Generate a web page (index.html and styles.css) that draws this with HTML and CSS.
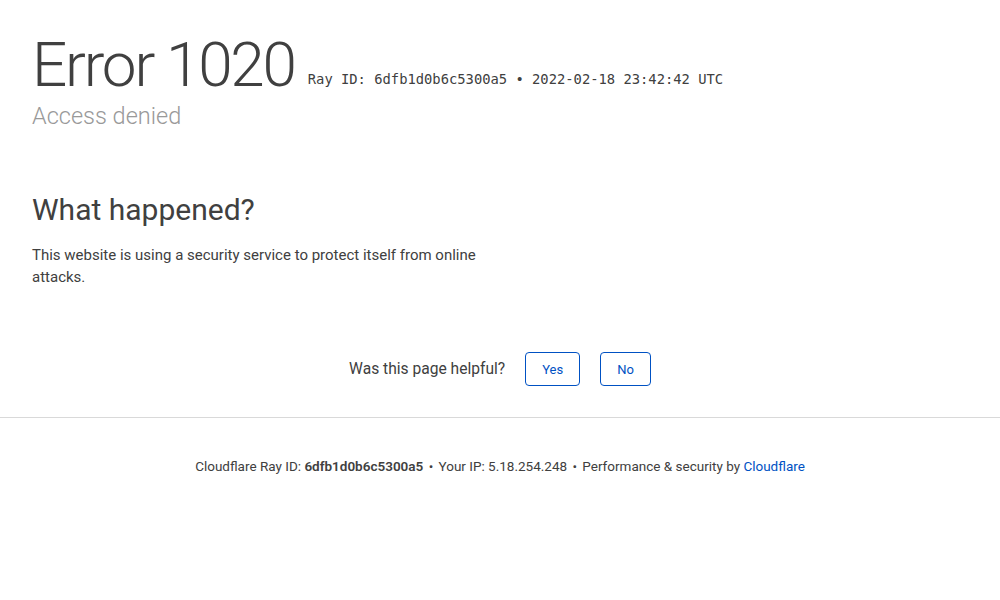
FILE: index.html
```html
<!DOCTYPE html>
<html lang="en">
<head>
<meta charset="utf-8">
<title>Access denied | Cloudflare</title>
<link rel="stylesheet" href="styles.css">
</head>
<body>
<div class="wrapper">
  <header class="header">
    <h1 class="title"><span class="code">Error 1020</span><span class="ray">Ray ID: 6dfb1d0b6c5300a5 &bull; 2022-02-18 23:42:42 UTC</span></h1>
    <h2 class="subtitle">Access denied</h2>
  </header>
  <section class="what">
    <h2 class="what-title">What happened?</h2>
    <p class="what-text">This website is using a security service to protect itself from online attacks.</p>
  </section>
  <div class="feedback">
    <span class="feedback-q">Was this page helpful?</span>
    <button class="fb-btn">Yes</button>
    <button class="fb-btn">No</button>
  </div>
</div>
<footer class="footer">
  <p class="footer-text">Cloudflare Ray ID: <strong>6dfb1d0b6c5300a5</strong> <span class="sep">&bull;</span> Your IP: 5.18.254.248 <span class="sep">&bull;</span> Performance &amp; security by <a class="cf-link" href="#">Cloudflare</a></p>
</footer>
</body>
</html>
```
FILE: styles.css
```css
html, body {
  margin: 0;
  padding: 0;
  background: #fff;
  color: #404040;
  font-family: Roboto, "Noto Sans", sans-serif;
}
.wrapper {
  padding: 0 32px;
}
.header {
  padding-top: 34px;
}
.title {
  margin: 0;
  font-weight: 300;
  display: flex;
  align-items: baseline;
  line-height: 1;
}
.code {
  font-size: 62px;
  font-weight: 300;
  letter-spacing: -2.2px;
  color: #404040;
}
.ray {
  font-family: "DejaVu Sans Mono", "Liberation Mono", monospace;
  font-size: 13.8px;
  font-weight: 400;
  margin-left: 13px;
  position: relative;
  top: -2px;
  color: #404040;
}
.subtitle {
  margin: 6px 0 0;
  font-size: 23.5px;
  font-weight: 300;
  color: #999;
  line-height: 1.2;
}
.what {
  margin-top: 62px;
  max-width: 480px;
}
.what-title {
  margin: 0;
  font-size: 30px;
  font-weight: 400;
  line-height: 1.2;
}
.what-text {
  margin: 16px 0 0;
  font-size: 15px;
  line-height: 22px;
}
.feedback {
  margin-top: 64px;
  display: flex;
  justify-content: center;
  align-items: center;
  gap: 20px;
}
.feedback-q {
  font-size: 15.6px;
}
.fb-btn {
  font-family: Roboto, "Noto Sans", sans-serif;
  font-size: 13px;
  color: #0051c3;
  background: #fff;
  border: 1px solid #0051c3;
  border-radius: 4px;
  height: 34px;
  padding: 0 16px;
  cursor: pointer;
}
.footer {
  margin-top: 31px;
  border-top: 1px solid #d9d9d9;
  padding-top: 39px;
}
.footer-text {
  margin: 0;
  text-align: center;
  font-size: 13.5px;
  line-height: 18px;
}
.footer-text strong {
  font-weight: 600;
}
.sep {
  margin: 0 2px;
}
.cf-link {
  color: #0051c3;
  text-decoration: none;
}
```
